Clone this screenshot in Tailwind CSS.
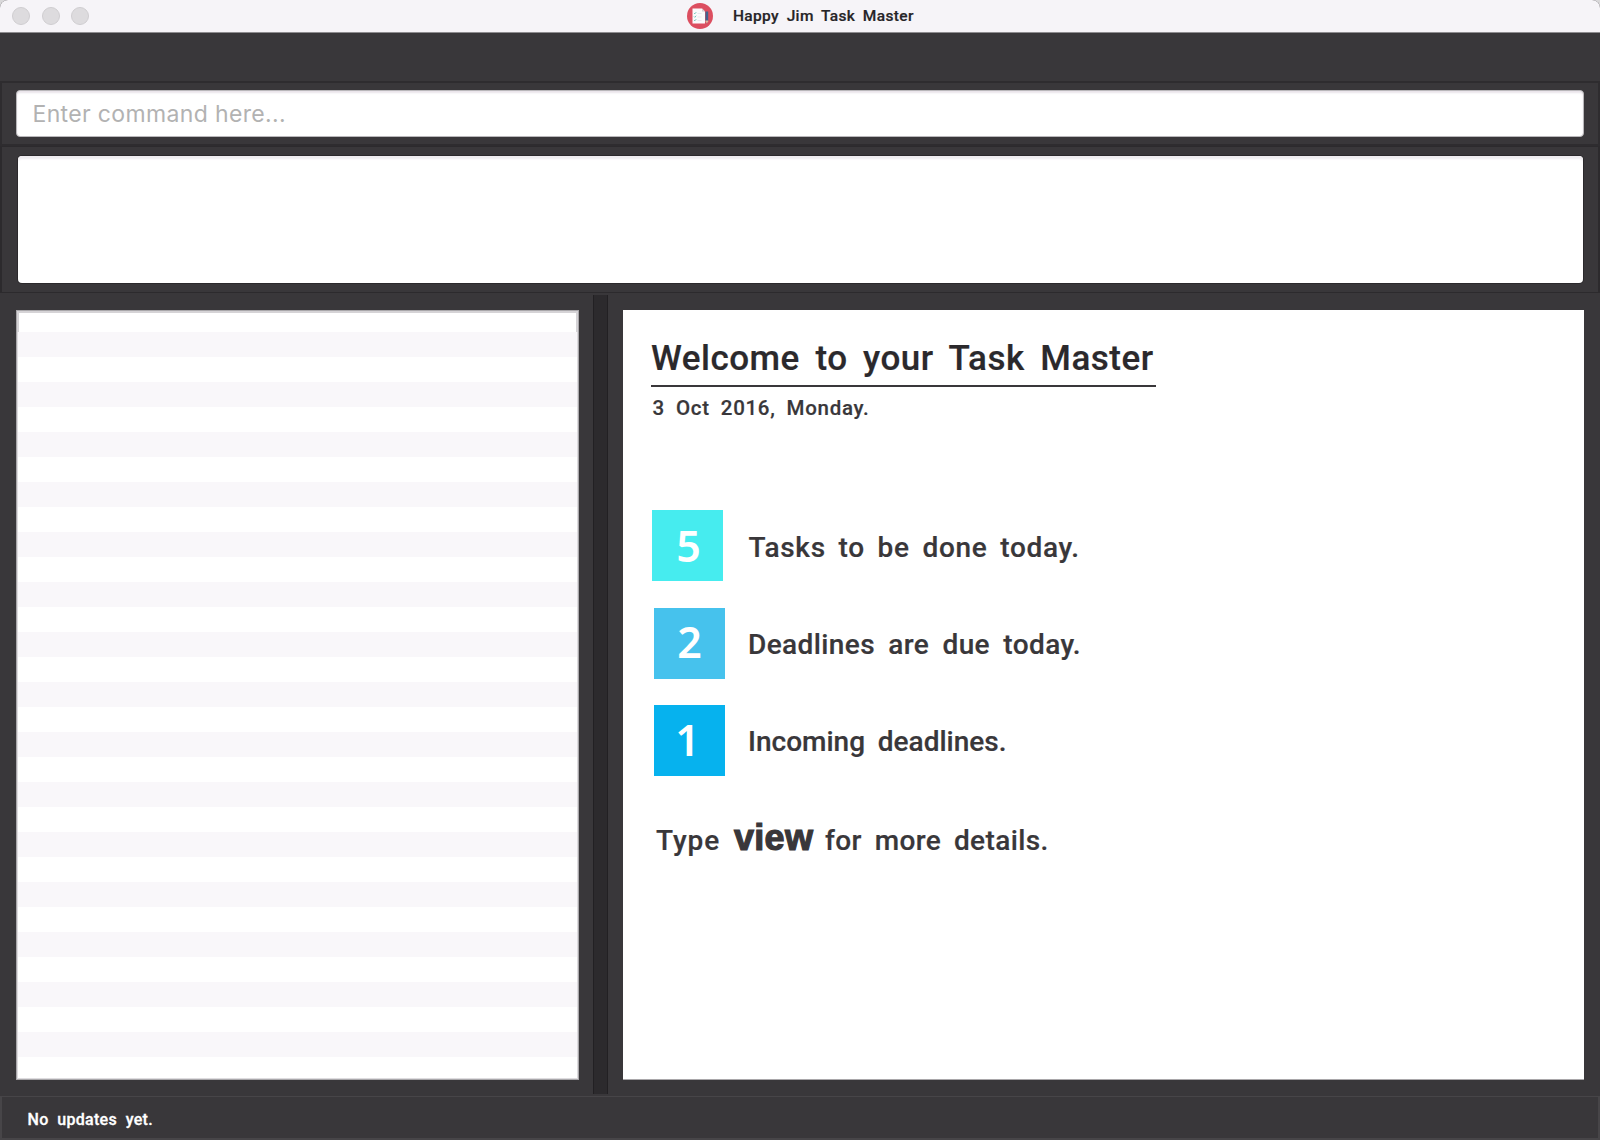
<!DOCTYPE html>
<html lang="en">
<head>
<meta charset="utf-8">
<title>Happy Jim Task Master</title>
<script src="https://cdn.jsdelivr.net/npm/@tailwindcss/browser@4"></script>
</head>
<body class="h-[1140px] w-[1600px] overflow-hidden bg-[#d9d8da] font-[Roboto,sans-serif] font-medium text-[#39373a]">
<div class="flex h-full flex-col overflow-hidden rounded-t-lg bg-[#39373a]">
  <header class="relative flex h-[33px] shrink-0 items-center border-b border-[#8e8c8f] bg-[#f6f4f8]">
    <div class="flex gap-[11.5px] pl-3">
      <span class="size-[18px] rounded-full border border-[#cfcdd0] bg-[#dddbde]"></span>
      <span class="size-[18px] rounded-full border border-[#cfcdd0] bg-[#dddbde]"></span>
      <span class="size-[18px] rounded-full border border-[#cfcdd0] bg-[#dddbde]"></span>
    </div>
    <div class="ml-[598px] flex items-center gap-5">
      <svg class="size-[26px]" viewBox="0 0 26 26">
        <circle cx="13" cy="13" r="13" fill="#dc4e60"/>
        <path d="M5.500 5.500h9.500l3 3V20.500H5.500z" fill="#fbf9fb"/>
        <path d="M15 5.500v3h3z" fill="#d5cbd2"/>
        <path d="M7 10l.8.8 1.400-1.600M7 13.500l.8.8 1.400-1.600M7 17l.8.8 1.400-1.600" fill="none" stroke="#4fb9a8" stroke-width=".8"/>
        <path d="M10.500 10.500h4M10.500 14h4M10.500 17.500h4" stroke="#e3e0e6" stroke-width=".7"/>
        <path d="M18.500 8.500h2.700V18l-1.350 2.500L18.500 18z" fill="#42618f"/>
        <path d="M18.500 17.500h2.700v1l-1.350 2-1.350-2z" fill="#e5b49a"/>
      </svg>
      <h1 class="text-[15.5px] leading-5 tracking-[0.35px] whitespace-nowrap text-[#262427] [word-spacing:3.4px] [-webkit-text-stroke:0.2px]">Happy Jim Task Master</h1>
    </div>
  </header>
  <div class="h-12 shrink-0"></div>

  <section class="h-[65px] shrink-0 border-2 border-[#2e2c2f] px-3.5 pt-[7px]">
    <div class="flex h-[47px] items-center rounded-[4px] border border-[#b9b7ba] bg-white pt-0.5 pl-[15.5px] font-[Inter,sans-serif] text-[23px] font-normal tracking-[0.35px] text-[#b2b2b2] shadow-[inset_0_2px_2px_#e9e4ea]">Enter command here...</div>
  </section>
  <section class="h-[147px] shrink-0 border-x-2 border-t border-b border-[#2c2a2d] px-[15.5px] pt-[9px]">
    <div class="h-[127px] rounded-[4px] bg-white shadow-[0_0_0_1px_#2b292c,inset_0_4px_2px_-1px_#efecf0]"></div>
  </section>

  <main class="flex h-[803px] shrink-0 pt-0.5">
    <div class="w-[593px] shrink-0 pt-[15px] pl-4">
      <div class="h-[770px] w-[563px] border border-[#a9a7aa] bg-white">
        <div class="h-[21px] border-x-2 border-t-2 border-[#d5d3d6]"></div>
        <div class="h-[747px] border-r border-b border-l border-[#dddbde] bg-[repeating-linear-gradient(to_bottom,#f9f7fa_0px,#f9f7fa_25px,#ffffff_25px,#ffffff_50px)]"></div>
      </div>
    </div>
    <div class="h-[799px] w-[15px] shrink-0 border-x border-[#222023] bg-[#2c2a2d]"></div>
    <div class="pt-[15px] pl-[15px]">
      <div class="h-[770px] w-[961px] border-b border-[#a9a7aa] bg-white pt-[29px] pl-7 [-webkit-text-stroke:0.2px]">
        <h2 class="h-[48px] w-[505px] border-b-2 border-[#39373a] text-[35px] leading-10 tracking-[0.5px] whitespace-nowrap text-[#2b292c] [word-spacing:6.4px]">Welcome to your Task Master</h2>
        <p class="mt-1.5 pl-[1.5px] text-[20.5px] leading-[30px] tracking-[0.7px] [word-spacing:5.3px]">3 Oct 2016, Monday.</p>
        <ul class="mt-[87px] flex flex-col gap-[26.5px] pl-px text-[28px] whitespace-nowrap">
          <li class="flex h-[71px] items-center">
            <span class="flex size-[71px] items-center justify-center bg-[#46ecef] pb-px pl-0.5 font-['Noto_Sans',sans-serif] text-[43px] leading-none font-semibold text-white [-webkit-text-stroke:0px]">5</span>
            <span class="pt-1 pl-[25.5px] tracking-[0.7px] [word-spacing:5.1px]">Tasks to be done today.</span>
          </li>
          <li class="flex h-[71px] items-center pl-0.5">
            <span class="flex size-[71px] items-center justify-center bg-[#46c2ed] pb-[3px] font-['Noto_Sans',sans-serif] text-[43px] leading-none font-semibold text-white [-webkit-text-stroke:0px]">2</span>
            <span class="pt-1 pl-[23px] tracking-[0.4px] [word-spacing:5.9px]">Deadlines are due today.</span>
          </li>
          <li class="flex h-[71px] items-center pl-0.5">
            <span class="flex size-[71px] items-center justify-center bg-[#06b2ee] pr-1 pb-[3px] font-['Noto_Sans',sans-serif] text-[43px] leading-none font-semibold text-white [-webkit-text-stroke:0px]">1</span>
            <span class="pt-0.5 pl-[23px] tracking-[0px] [word-spacing:5.8px]">Incoming deadlines.</span>
          </li>
        </ul>
        <p class="mt-[42px] flex items-baseline pl-[5px] text-[28px] leading-10 whitespace-nowrap">
          <span class="w-[78px] tracking-[0.9px]">Type</span>
          <strong class="w-[91px] font-['Liberation_Sans',sans-serif] text-[36px] leading-10 font-bold tracking-[0.3px] [-webkit-text-stroke:1.2px]">view</strong>
          <span class="tracking-[0.4px] [word-spacing:5.4px]">for more details.</span>
        </p>
      </div>
    </div>
  </main>

  <footer class="flex flex-1 items-center border-2 border-t border-[#474548] pt-1 pl-[25.5px] text-[16px] tracking-[0.3px] text-white [word-spacing:4.4px] [-webkit-text-stroke:0.3px]">No updates yet.</footer>
</div>
</body>
</html>
